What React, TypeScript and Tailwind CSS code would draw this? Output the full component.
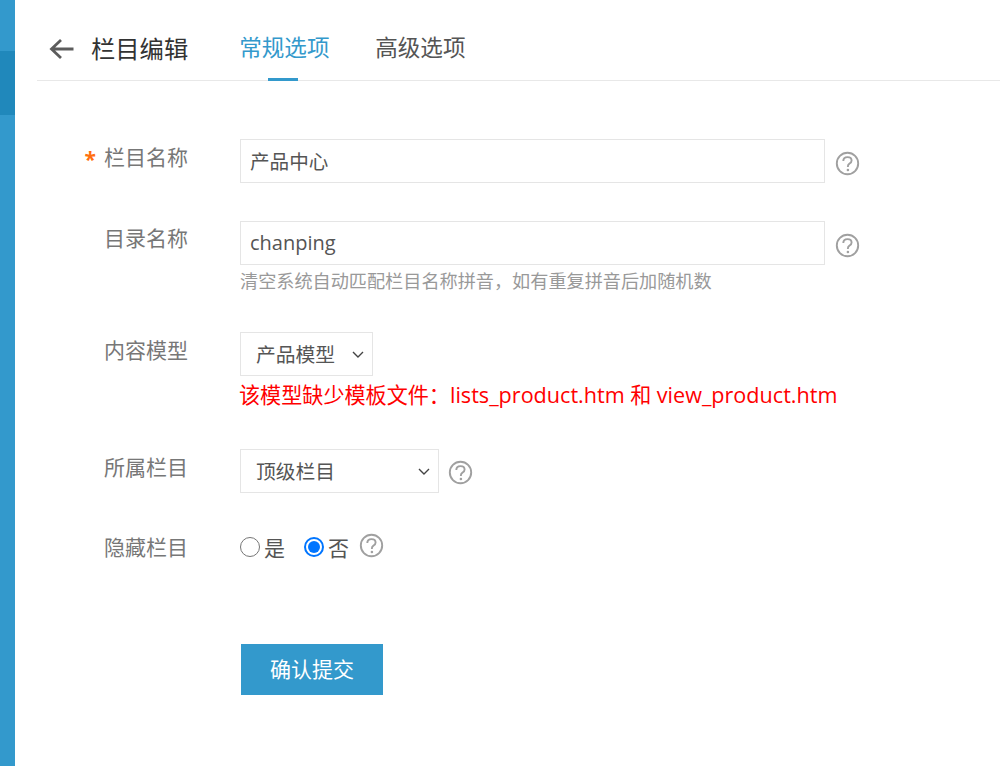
import React from "react";

function Help({ className = "" }: { className?: string }) {
  return (
    <svg className={"shrink-0 " + className} width="25" height="25" viewBox="0 0 25 25" fill="none">
      <circle cx="12.5" cy="12.5" r="10.7" stroke="#a0a0a0" strokeWidth="1.9" />
      <path d="M8.3 10c0-2.400 1.800-3.900 4.200-3.900 2.400 0 4.100 1.400 4.100 3.400 0 1.600-.9 2.300-2 3.100-1 .7-1.700 1.300-1.700 2.700v.6" stroke="#a0a0a0" strokeWidth="1.9" />
      <circle cx="12.900" cy="19" r="1.300" fill="#a0a0a0" />
    </svg>
  );
}

function Chevron() {
  return (
    <svg width="12" height="7" viewBox="0 0 12 7" fill="none" className="shrink-0">
      <path d="M1 1l5 5 5-5" stroke="#444" strokeWidth="1.4" />
    </svg>
  );
}

function Label({ children, required, className = "" }: { children: React.ReactNode; required?: boolean; className?: string }) {
  return (
    <div className={"w-[203px] shrink-0 pr-[52px] flex justify-end items-baseline text-[21px] leading-[30px] text-[#777] " + className}>
      {required && <span className="text-[#ff6f0f] font-bold mr-[8px] translate-y-[2px]">*</span>}
      {children}
    </div>
  );
}

export default function App() {
  return (
    <div className="flex w-[1000px] h-[766px] overflow-hidden bg-white font-['Open_Sans','Noto_Sans_CJK_SC',sans-serif]">
      <aside className="w-[15px] shrink-0 bg-[#3399cc] pt-[51px]">
        <div className="h-[64px] bg-[#2088bb]" />
      </aside>
      <main className="flex-1 pl-[22px]">
        <header className="h-[81px] border-b border-[#e8e8e8] flex items-end">
          <div className="flex items-center h-[80px] pt-[17px] pb-[1px]">
            <svg width="26" height="22" viewBox="0 0 26 22" fill="none" className="ml-[12px] mt-[2px]">
              <path d="M24.500 11H3M12 2l-9.500 9 9.500 9" stroke="#5c5c5c" strokeWidth="2.800" />
            </svg>
            <h1 className="ml-[16px] mt-[1px] text-[24.300px] leading-[32px] text-[#333]">栏目编辑</h1>
          </div>
          <nav className="ml-[51px] flex h-[80px] text-[22.600px]">
            <div className="relative w-[90px] pt-[32px] leading-[32px] text-[#3399cc] text-center whitespace-nowrap">
              常规选项
              <span className="absolute left-[29px] bottom-[-1px] w-[30px] h-[3px] bg-[#3399cc]" />
            </div>
            <div className="ml-[46px] pt-[32px] leading-[32px] text-[#555] whitespace-nowrap">高级选项</div>
          </nav>
        </header>

        <form className="pt-[58px]">
          <div className="flex">
            <Label required className="pt-[3px]">栏目名称</Label>
            <div className="flex items-center self-start">
              <div className="w-[585px] h-[44px] border border-[#e5e5e5] pl-[9px] pt-[1px] flex items-center text-[19.600px] text-[#555]">产品中心</div>
              <Help className="ml-[10px] mt-[5px]" />
            </div>
          </div>

          <div className="flex mt-[38px]">
            <Label className="pt-[2px]">目录名称</Label>
            <div>
              <div className="flex items-center">
                <div className="w-[585px] h-[44px] border border-[#e5e5e5] pl-[9px] flex items-center text-[20px] text-[#555]">chanping</div>
                <Help className="ml-[10px] mt-[5px]" />
              </div>
              <p className="mt-[1px] text-[18.150px] leading-[30px] text-[#999]">清空系统自动匹配栏目名称拼音，如有重复拼音后加随机数</p>
            </div>
          </div>

          <div className="flex mt-[36px]">
            <Label className="pt-[3px]">内容模型</Label>
            <div>
              <div className="w-[133px] h-[44px] border border-[#e5e5e5] pl-[15px] pr-[8px] pt-[1px] flex items-center justify-between text-[19.800px] text-[#555]">
                <span>产品模型</span>
                <Chevron />
              </div>
              <p className="mt-[4px] ml-[-1px] text-[21.100px] leading-[30px] text-[#ff0000] whitespace-nowrap">该模型缺少模板文件：<span className="text-[21.600px]">lists_product.htm</span> 和 <span className="text-[21.600px]">view_product.htm</span></p>
            </div>
          </div>

          <div className="flex mt-[39px]">
            <Label className="pt-[3px]">所属栏目</Label>
            <div className="flex items-center">
              <div className="w-[199px] h-[44px] border border-[#e5e5e5] pl-[15px] pr-[8px] pt-[1px] flex items-center justify-between text-[19.800px] text-[#555]">
                <span>顶级栏目</span>
                <Chevron />
              </div>
              <Help className="ml-[9px] mt-[3px]" />
            </div>
          </div>

          <div className="flex mt-[38px]">
            <Label className="pt-[1px]">隐藏栏目</Label>
            <div className="flex items-center h-[36px] text-[21px] text-[#555]">
              <span className="w-[20px] h-[20px] rounded-full border-[1.500px] border-[#767676] mt-[-4px]" />
              <span className="ml-[4px]">是</span>
              <span className="ml-[19px] w-[20px] h-[20px] rounded-full border-[2px] border-[#0075ff] mt-[-4px] flex items-center justify-center">
                <span className="w-[12px] h-[12px] rounded-full bg-[#0075ff]" />
              </span>
              <span className="ml-[4px]">否</span>
              <Help className="ml-[10px] mt-[-8px]" />
            </div>
          </div>

          <div className="flex mt-[77px] pl-[204px]">
            <button type="button" className="w-[142px] h-[51px] bg-[#3399cc] text-white text-[21px]">确认提交</button>
          </div>
        </form>
      </main>
    </div>
  );
}
